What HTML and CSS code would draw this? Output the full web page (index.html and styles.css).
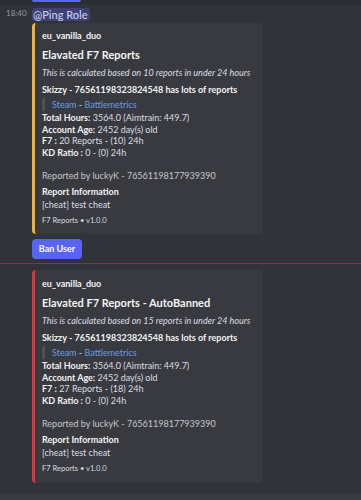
FILE: index.html
```html
<!DOCTYPE html>
<html>
<head>
<meta charset="utf-8">
<link rel="stylesheet" href="styles.css">
</head>
<body>
<div class="prev"><div class="prev-btn"></div></div>

<div class="msg msg-first">
  <div class="gutter"><span class="time">18:40</span></div>
  <div class="content">
    <div class="line"><span class="mention">@Ping Role</span></div>
    <div class="embed embed-gold">
      <div class="author">eu_vanilla_duo</div>
      <div class="title">Elavated F7 Reports</div>
      <div class="italic">This is calculated based on 10 reports in under 24 hours</div>
      <div class="strong">Skizzy - 76561198323824548 has lots of reports</div>
      <div class="quote"><span class="link">Steam</span> - <span class="link">Battlemetrics</span></div>
      <div class="fields">
        <div><b>Total Hours:</b> 3564.0 (Aimtrain: 449.7)</div>
        <div><b>Account Age:</b> 2452 day(s) old</div>
        <div><b>F7 :</b> 20 Reports - (10) 24h</div>
        <div><b>KD Ratio :</b> 0 - (0) 24h</div>
      </div>
      <div class="reported">Reported by luckyK - 76561198177939390</div>
      <div class="field-name">Report Information</div>
      <div class="field-value">[cheat] test cheat</div>
      <div class="footer">F7 Reports • v1.0.0</div>
    </div>
    <button class="btn">Ban User</button>
  </div>
</div>

<div class="divider"></div>

<div class="msg msg-second">
  <div class="gutter"></div>
  <div class="content">
    <div class="embed embed-red">
      <div class="author">eu_vanilla_duo</div>
      <div class="title">Elavated F7 Reports - AutoBanned</div>
      <div class="italic">This is calculated based on 15 reports in under 24 hours</div>
      <div class="strong">Skizzy - 76561198323824548 has lots of reports</div>
      <div class="quote"><span class="link">Steam</span> - <span class="link">Battlemetrics</span></div>
      <div class="fields">
        <div><b>Total Hours:</b> 3564.0 (Aimtrain: 449.7)</div>
        <div><b>Account Age:</b> 2452 day(s) old</div>
        <div><b>F7 :</b> 27 Reports - (18) 24h</div>
        <div><b>KD Ratio :</b> 0 - (0) 24h</div>
      </div>
      <div class="reported">Reported by luckyK - 76561198177939390</div>
      <div class="field-name">Report Information</div>
      <div class="field-value">[cheat] test cheat</div>
      <div class="footer">F7 Reports • v1.0.0</div>
    </div>
  </div>
</div>

<div class="input-strip"></div>
</body>
</html>
```
FILE: styles.css
```css
html, body {
  margin: 0;
  padding: 0;
  background: #323338;
  height: 500px;
  overflow: hidden;
}
body {
  font-family: Lato, "Noto Sans", sans-serif;
  color: #dbdee1;
  display: flex;
  flex-direction: column;
}
.prev {
  height: 5px;
  background: #2c2d32;
  flex: none;
}
.prev-btn {
  margin-left: 32px;
  width: 49px;
  height: 2px;
  background: #5865f2;
  border-radius: 0 0 3px 3px;
}
.msg {
  display: grid;
  grid-template-columns: 32px 1fr;
  flex: none;
}
.msg-first {
  padding-top: 1px;
  padding-bottom: 4px;
}
.msg-second {
  padding-top: 5px;
}
.gutter {
  padding-left: 6px;
}
.time {
  display: block;
  font-size: 8px;
  line-height: 14px;
  color: #949ba4;
}
.line {
  height: 16px;
  display: flex;
  align-items: center;
}
.mention {
  font-size: 11px;
  line-height: 13px;
  color: #c9cdfb;
  background: #3d4270;
  border-radius: 3px;
  padding: 0 2px 0 1px;
  font-weight: 500;
}
.embed {
  width: 221px;
  background: #393a40;
  border-radius: 4px;
  padding: 7px 0 8px 7px;
  margin-top: 1px;
}
.embed-gold { border-left: 3px solid #f0b232; }
.embed-red {
  border-left: 3px solid #da373c;
  padding-bottom: 9px;
}
.embed-red .author { margin-top: 1px; }
.author {
  font-size: 9px;
  line-height: 12px;
  font-weight: 700;
  color: #f2f3f5;
}
.title {
  font-size: 11px;
  line-height: 14px;
  font-weight: 700;
  color: #f2f3f5;
  margin-top: 6px;
}
.italic {
  font-size: 9px;
  line-height: 12px;
  font-style: italic;
  color: #dbdee1;
  margin-top: 5px;
}
.strong {
  font-size: 9px;
  line-height: 12px;
  font-weight: 700;
  color: #f2f3f5;
  margin-top: 5px;
}
.quote {
  font-size: 9px;
  line-height: 13px;
  margin-top: 2px;
  border-left: 3px solid #4e5058;
  border-radius: 1px;
  padding-left: 7px;
  color: #dbdee1;
}
.link { color: #6d98e2; }
.fields {
  font-size: 9px;
  line-height: 11.6px;
  margin-top: 1px;
}
.fields b {
  font-weight: 700;
  color: #f2f3f5;
}
.reported {
  font-size: 9px;
  line-height: 12px;
  color: #c4c7cc;
  margin-top: 11.6px;
}
.field-name {
  font-size: 9px;
  line-height: 12px;
  font-weight: 700;
  color: #f2f3f5;
  margin-top: 4px;
}
.field-value {
  font-size: 9px;
  line-height: 12px;
  margin-top: 1px;
}
.footer {
  font-size: 7.5px;
  line-height: 10px;
  margin-top: 5px;
  color: #dbdee1;
}
.btn {
  display: block;
  margin-top: 5px;
  width: 50px;
  height: 20px;
  padding: 0;
  border: none;
  border-radius: 4px;
  background: #5865f2;
  color: #ffffff;
  font-family: Lato, "Noto Sans", sans-serif;
  font-size: 9px;
  font-weight: 700;
}
.divider {
  height: 1px;
  background: #7a3b3f;
  flex: none;
}
.input-strip {
  margin-top: auto;
  height: 7px;
  background: #383a40;
  flex: none;
}
```
